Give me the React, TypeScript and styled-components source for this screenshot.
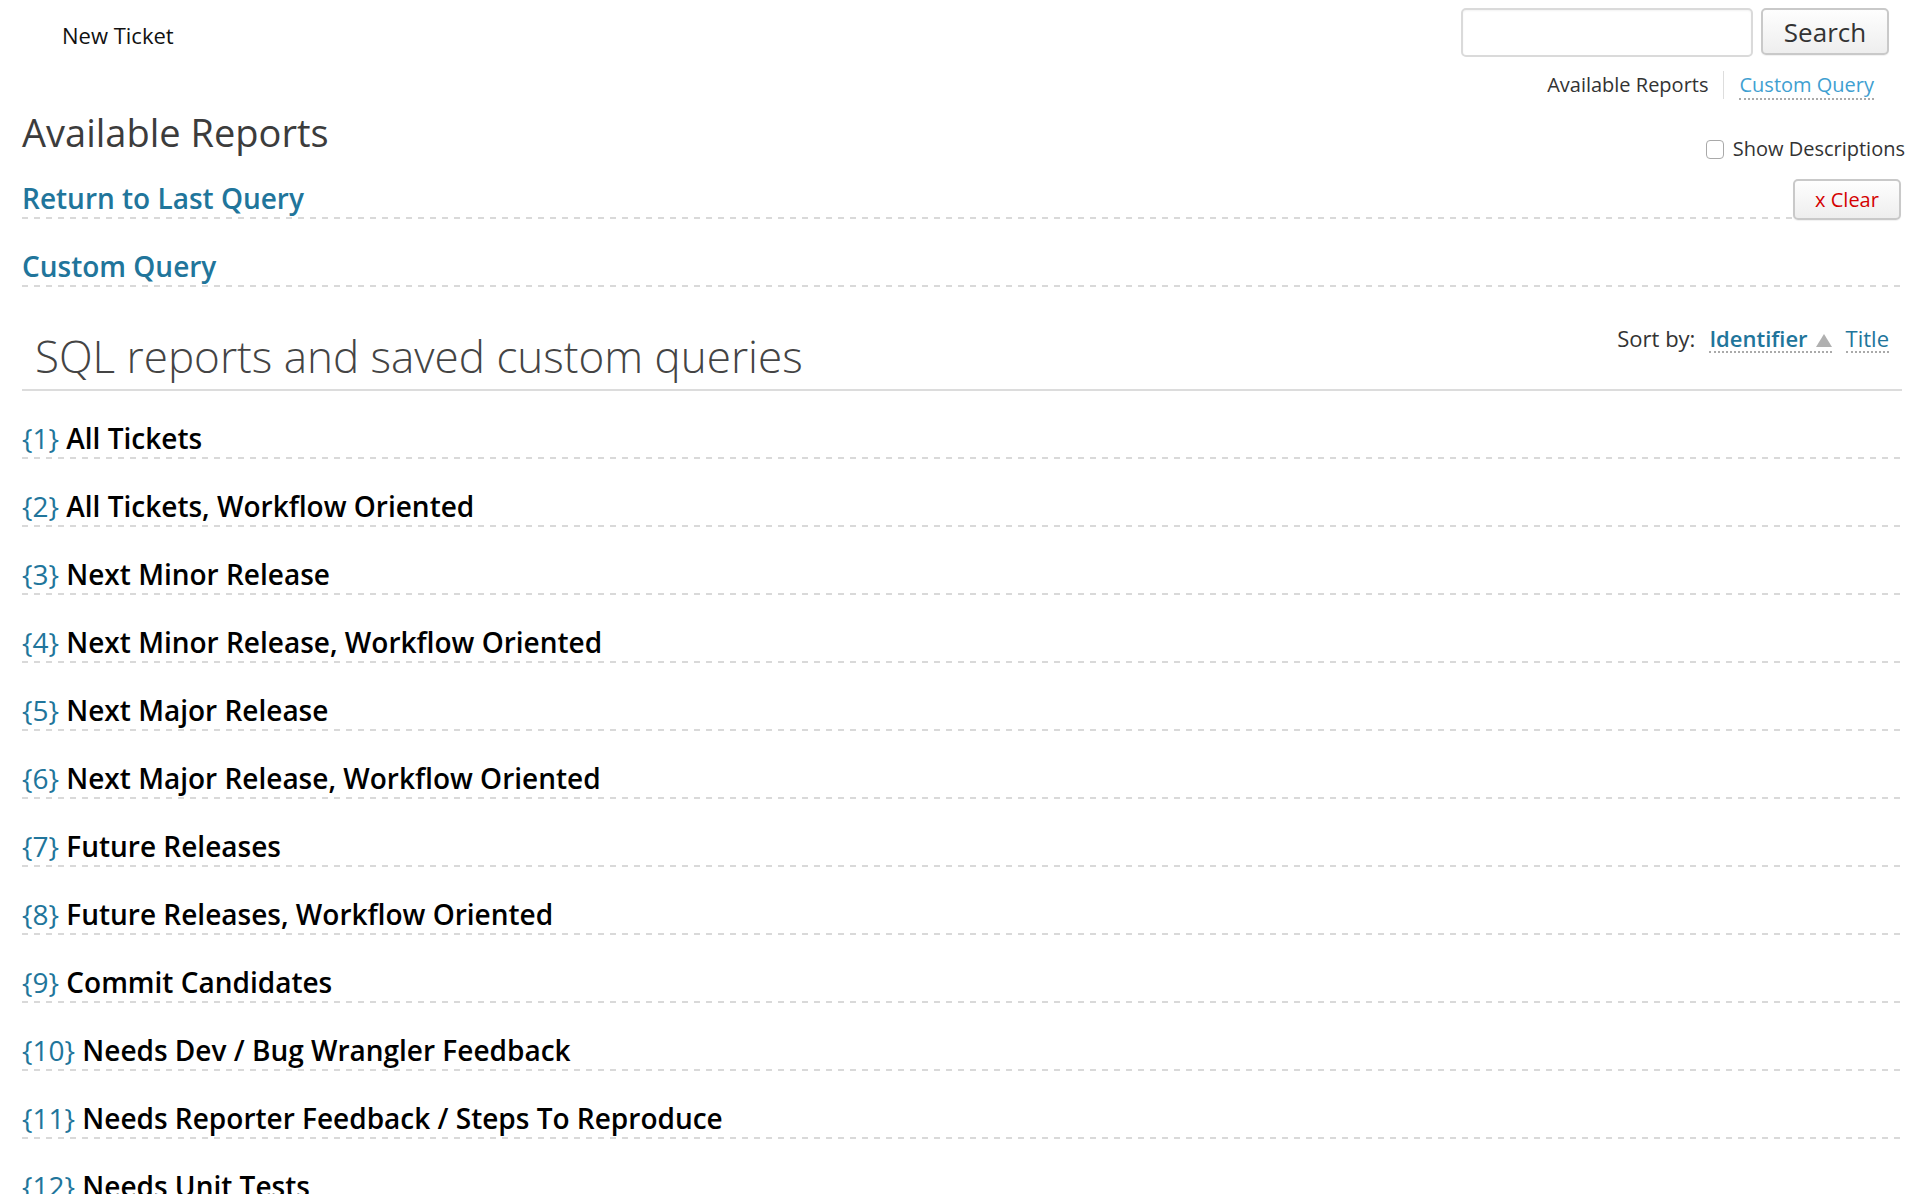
import React from "react";
import styled, { createGlobalStyle } from "styled-components";

const GlobalStyle = createGlobalStyle`
  html, body { margin: 0; padding: 0; background: #fff; }
  body { font-family: "Open Sans", "Liberation Sans", sans-serif; color: #000; }
  * { box-sizing: border-box; }
`;

const dashed = `
  background-image: repeating-linear-gradient(to right, #d9d9d9 0 6px, transparent 6px 12px);
  background-size: 100% 2px;
  background-position: left bottom;
  background-repeat: no-repeat;
`;

const Page = styled.div`
  padding: 0 16px 40px 22px;
`;

const TopBar = styled.header`
  display: flex;
  justify-content: space-between;
  align-items: flex-start;
  padding-top: 8px;
`;

const MainNav = styled.a`
  margin: 12px 0 0 40px;
  font-size: 22px;
  line-height: 30px;
  color: #111;
  text-decoration: none;
`;

const TopRight = styled.div`
  display: flex;
  flex-direction: column;
  align-items: flex-end;
  margin-right: 13px;
`;

const SearchForm = styled.form`
  display: flex;
  gap: 8px;
  align-items: flex-start;
  margin: 0;
`;

const SearchInput = styled.input`
  width: 292px;
  height: 49px;
  border: 2px solid #dadada;
  border-radius: 5px;
  background: #fff;
  box-shadow: inset 0 1px 2px rgba(0, 0, 0, 0.05);
  font-size: 20px;
  padding: 0 10px;
  font-family: inherit;
`;

const Button = styled.button<{ $danger?: boolean }>`
  font-family: inherit;
  border: 2px solid #c9c9c9;
  border-radius: 5px;
  background: linear-gradient(#fefefe, #eeeeee);
  box-shadow: 0 1px 1px rgba(0, 0, 0, 0.06);
  color: ${(p) => (p.$danger ? "#d40000" : "#333")};
  cursor: pointer;
  padding: 0;
`;

const SearchButton = styled(Button)`
  width: 128px;
  height: 47px;
  font-size: 26px;
  line-height: 1;
`;

const CtxNav = styled.ul`
  display: flex;
  list-style: none;
  margin: 14px 0 0;
  padding: 0;
`;

const CtxItem = styled.li<{ $sep?: boolean }>`
  font-size: 20px;
  line-height: 28px;
  padding: 0 15px;
  color: #333;
  border-left: ${(p) => (p.$sep ? "1px solid #ddd" : "none")};
`;

const CtxLink = styled.a`
  color: #3fa0d1;
  text-decoration: none;
  border-bottom: 2px dotted #aaa;
`;

const HeadRow = styled.div`
  display: flex;
  justify-content: space-between;
  align-items: flex-start;
  margin-top: 9px;
`;

const Title = styled.h1`
  margin: 0;
  font-size: 38px;
  line-height: 48px;
  font-weight: 400;
  color: #3c3c3c;
`;

const DescLabel = styled.label`
  display: flex;
  align-items: center;
  gap: 9px;
  margin: 27px -3px 0 0;
  font-size: 20px;
  line-height: 28px;
  color: #333;
`;

const Check = styled.input`
  appearance: none;
  width: 18px;
  height: 19px;
  margin: 0;
  border: 1px solid #a9a9a9;
  border-radius: 4px;
  background: #fff;
`;

const ReturnRow = styled.div`
  display: flex;
  align-items: flex-end;
  margin-top: 16px;
`;

const LinkHeading = styled.h2<{ $gap?: number }>`
  flex: 1;
  margin: ${(p) => p.$gap ?? 0}px 0 0;
  padding-bottom: 3px;
  font-size: 28px;
  line-height: 36px;
  font-weight: 600;
  ${dashed}
`;

const BlueLink = styled.a`
  color: #21759b;
  text-decoration: none;
`;

const ClearButton = styled(Button)`
  width: 108px;
  height: 41px;
  margin: 0 1px -1px 0;
  font-size: 20px;
`;

const SqlRow = styled.div`
  display: flex;
  justify-content: space-between;
  align-items: flex-start;
  margin-top: 37px;
  padding-bottom: 5px;
  border-bottom: 2px solid #dcdcdc;
`;

const SqlTitle = styled.h2`
  margin: 4px 0 0;
  padding-left: 13px;
  font-size: 44px;
  line-height: 56px;
  font-weight: 300;
  color: #444;
`;

const SortBy = styled.div`
  display: flex;
  align-items: baseline;
  margin-right: 13px;
  font-size: 22px;
  line-height: 28px;
  color: #333;
`;

const SortLink = styled.a<{ $active?: boolean }>`
  display: inline-flex;
  align-items: baseline;
  gap: 8px;
  margin-left: 14px;
  color: #21759b;
  font-weight: ${(p) => (p.$active ? 600 : 400)};
  text-decoration: none;
  border-bottom: 2px dotted #aaa;
  line-height: 26px;
`;

const ReportList = styled.ul`
  list-style: none;
  margin: 29px 0 0;
  padding: 0;
`;

const ReportItem = styled.li`
  margin-bottom: 29px;
  padding-bottom: 3px;
  font-size: 28px;
  line-height: 36px;
  font-weight: 600;
  ${dashed}
`;

const ReportLink = styled.a`
  color: #000;
  text-decoration: none;
`;

const ReportNum = styled.em`
  font-style: normal;
  font-weight: 500;
  color: #21759b;
`;

const reports = [
  "All Tickets",
  "All Tickets, Workflow Oriented",
  "Next Minor Release",
  "Next Minor Release, Workflow Oriented",
  "Next Major Release",
  "Next Major Release, Workflow Oriented",
  "Future Releases",
  "Future Releases, Workflow Oriented",
  "Commit Candidates",
  "Needs Dev / Bug Wrangler Feedback",
  "Needs Reporter Feedback / Steps To Reproduce",
  "Needs Unit Tests",
];

const SortArrow = () => (
  <svg width="16" height="13" viewBox="0 0 16 13" aria-hidden>
    <path d="M8 0 L16 13 L0 13 Z" fill="#b0b0b0" />
  </svg>
);

export default function App() {
  return (
    <>
      <GlobalStyle />
      <Page>
        <TopBar>
          <MainNav href="#">New Ticket</MainNav>
          <TopRight>
            <SearchForm onSubmit={(e) => e.preventDefault()}>
              <SearchInput type="text" />
              <SearchButton type="submit">Search</SearchButton>
            </SearchForm>
            <CtxNav>
              <CtxItem>Available Reports</CtxItem>
              <CtxItem $sep>
                <CtxLink href="#">Custom Query</CtxLink>
              </CtxItem>
            </CtxNav>
          </TopRight>
        </TopBar>

        <HeadRow>
          <Title>Available Reports</Title>
          <DescLabel>
            <Check type="checkbox" />
            Show Descriptions
          </DescLabel>
        </HeadRow>

        <ReturnRow>
          <LinkHeading>
            <BlueLink href="#">Return to Last Query</BlueLink>
          </LinkHeading>
          <ClearButton $danger>x Clear</ClearButton>
        </ReturnRow>

        <LinkHeading $gap={29}>
          <BlueLink href="#">Custom Query</BlueLink>
        </LinkHeading>

        <SqlRow>
          <SqlTitle>SQL reports and saved custom queries</SqlTitle>
          <SortBy>
            Sort by:
            <SortLink href="#" $active>
              Identifier <SortArrow />
            </SortLink>
            <SortLink href="#">Title</SortLink>
          </SortBy>
        </SqlRow>

        <ReportList>
          {reports.map((r, i) => (
            <ReportItem key={r}>
              <ReportLink href="#">
                <ReportNum>{`{${i + 1}}`}</ReportNum> {r}
              </ReportLink>
            </ReportItem>
          ))}
        </ReportList>
      </Page>
    </>
  );
}
